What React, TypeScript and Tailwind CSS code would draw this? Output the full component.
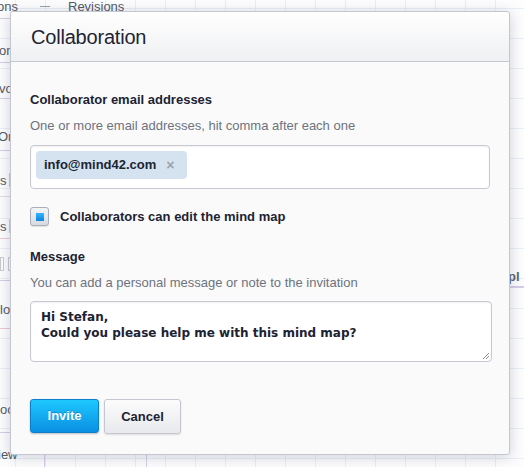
import React from "react";

const sans = { fontFamily: '"Liberation Sans", Arial, sans-serif' };

export default function App() {
  return (
    <div
      className="relative w-[524px] h-[467px] overflow-hidden bg-[#fdfdfe] bg-[linear-gradient(to_right,#e8eff7_1px,transparent_1px),linear-gradient(to_bottom,#e8eff7_1px,transparent_1px)] bg-[size:30px_30px] bg-[position:15px_8px]"
      style={sans}
    >
      {/* background page */}
      <div className="flex h-full">
        <div className="w-[30px] flex flex-col">
          <div className="h-[19px] border-b border-[#d6cde6] text-[13px] leading-[13px] text-[#555a66] -ml-[3px]">ons</div>
          <div className="h-[44px] border-b border-[#d6cde6] pt-[24px] text-[13px] leading-[16px] text-[#555a66] -ml-[1px]">on</div>
          <div className="h-[36px] border-b border-[#d6cde6] pt-[18px] text-[13px] leading-[16px] text-[#555a66] -ml-[1px]">vo</div>
          <div className="h-[52px] border-b border-[#d6cde6] pt-[30px] text-[13px] leading-[16px] text-[#555a66] -ml-[2px]">Ord</div>
          <div className="h-[46px] border-b border-[#e6d9ea] pt-[22px] text-[13px] leading-[16px] text-[#555a66] flex gap-[2px]"><span>s</span><span className="w-[6px] h-[14px] border border-[#c9c9cf]"></span></div>
          <div className="h-[42px] border-b border-[#efc9cf] pt-[22px] text-[13px] leading-[16px] text-[#555a66] flex gap-[2px]"><span>s</span><span className="w-[6px] h-[14px] border border-[#c9c9cf]"></span></div>
          <div className="h-[42px] border-b border-[#d6cde6] pt-[18px] flex gap-[4px]"><span className="w-[4px] h-[14px] border border-[#c9c9cf]"></span><span className="w-[6px] h-[14px] border border-[#c9c9cf]"></span></div>
          <div className="h-[48px] border-b border-[#efc9cf] pt-[21px] text-[13px] leading-[16px] text-[#555a66]">lo</div>
          <div className="h-[104px] border-b border-[#d6cde6] pt-[73px] text-[13px] leading-[16px] text-[#555a66]">oo</div>
          <div className="pt-[14px] text-[13px] leading-[16px] text-[#555a66] -ml-[2px]">iew</div>
        </div>
        <div className="flex-1 flex flex-col">
          <div className="h-[19px] flex items-start gap-[18px] pl-[10px]">
            <span className="mt-[6px] w-[10px] border-t border-[#9aa0ab]"></span>
            <span className="text-[13px] leading-[13px] text-[#555a66]">Revisions</span>
          </div>
          <div className="flex-1 flex justify-end">
            <div className="w-[14px] flex flex-col pt-[250px]">
              <div className="h-[19px] border-b-2 border-[#d6cde6] text-[13px] font-bold leading-[16px] text-[#5f6573] -ml-[2px]">pl</div>
            </div>
          </div>
          <div className="h-[14px] flex">
            <div className="ml-[14px] w-[1px] bg-[#d6cde6]"></div>
            <div className="ml-[101px] w-[1px] bg-[#d6cde6]"></div>
          </div>
        </div>
      </div>

      {/* dialog */}
      <div className="absolute left-[10px] top-[11px] w-[500px] h-[444px] rounded-[3px] border border-[#c4c7d1] bg-[#fafafa] shadow-[0_2px_14px_rgba(40,50,80,0.22)] flex flex-col">
        <div className="h-[50px] shrink-0 rounded-t-[3px] border-b border-[#c4c7d1] bg-[linear-gradient(to_bottom,#ffffff,#eff0f2)] px-[20px] flex items-center">
          <h1 className="text-[20px] leading-[24px] text-[#1e2433] tracking-[-0.2px] pt-[1px]">Collaboration</h1>
        </div>
        <div className="px-[19px] pt-[29px] flex flex-col items-start">
          <div className="text-[13px] leading-[18px] font-bold text-[#1c2333]">Collaborator email addresses</div>
          <div className="mt-[8px] text-[13px] leading-[18px] text-[#6d7380]">One or more email addresses, hit comma after each one</div>
          <div className="mt-[10px] w-[460px] h-[44px] rounded-[4px] border border-[#c6c9d2] bg-white shadow-[inset_0_1px_2px_rgba(0,0,0,0.06)] p-[5px]">
            <div className="inline-flex h-[28px] w-[151px] items-center rounded-[4px] bg-[#d5e3f0] pl-[8px] gap-[10px]">
              <span className="text-[13px] font-bold text-[#1c2333]">info@mind42.com</span>
              <span className="text-[14px] font-bold leading-none text-[#9ba3ad]">×</span>
            </div>
          </div>
          <label className="mt-[18px] flex items-center gap-[11px]">
            <span className="w-[19px] h-[19px] rounded-[3px] border border-[#a9aeb9] bg-[linear-gradient(to_bottom,#f3f4f6,#d7dae0)] flex items-center justify-center shadow-[0_1px_1px_rgba(0,0,0,0.1)]">
              <span className="w-[8px] h-[8px] bg-[linear-gradient(to_bottom,#33b5ff,#0a84e0)]"></span>
            </span>
            <span className="text-[13px] leading-[18px] font-bold text-[#1c2333]">Collaborators can edit the mind map</span>
          </label>
          <div className="mt-[22px] text-[13px] leading-[18px] font-bold text-[#1c2333]">Message</div>
          <div className="mt-[8px] text-[13px] leading-[18px] text-[#6d7380]">You can add a personal message or note to the invitation</div>
          <div className="relative mt-[9px] w-[462px] h-[61px] rounded-[4px] border border-[#c6c9d2] bg-white shadow-[inset_0_1px_2px_rgba(0,0,0,0.06)] px-[10px] pt-[7px]">
            <div className="text-[12px] leading-[16px] font-bold text-[#1c2333]" style={{ fontFamily: '"DejaVu Sans", Verdana, sans-serif' }}>
              <div>Hi Stefan,</div>
              <div>Could you please help me with this mind map?</div>
            </div>
            <svg className="absolute right-[1px] bottom-[1px]" width="8" height="8" viewBox="0 0 8 8">
              <path d="M7 1 L1 7 M7 4 L4 7" stroke="#8a8f99" strokeWidth="1" fill="none" />
            </svg>
          </div>
          <div className="mt-[37px] flex items-start gap-[5px]">
            <button className="w-[69px] h-[34px] rounded-[3px] border border-[#0b7fc9] bg-[linear-gradient(to_bottom,#1ec8ff,#0a8fe2)] text-[13px] font-bold text-white shadow-[0_1px_2px_rgba(0,0,0,0.25)] [text-shadow:0_-1px_0_rgba(0,60,120,0.35)]">Invite</button>
            <button className="w-[77px] h-[35px] rounded-[3px] border border-[#c4c7cf] bg-[linear-gradient(to_bottom,#fcfcfd,#e8e9ec)] text-[13px] font-bold text-[#1c2333] shadow-[0_1px_2px_rgba(0,0,0,0.12)]">Cancel</button>
          </div>
        </div>
      </div>
    </div>
  );
}
